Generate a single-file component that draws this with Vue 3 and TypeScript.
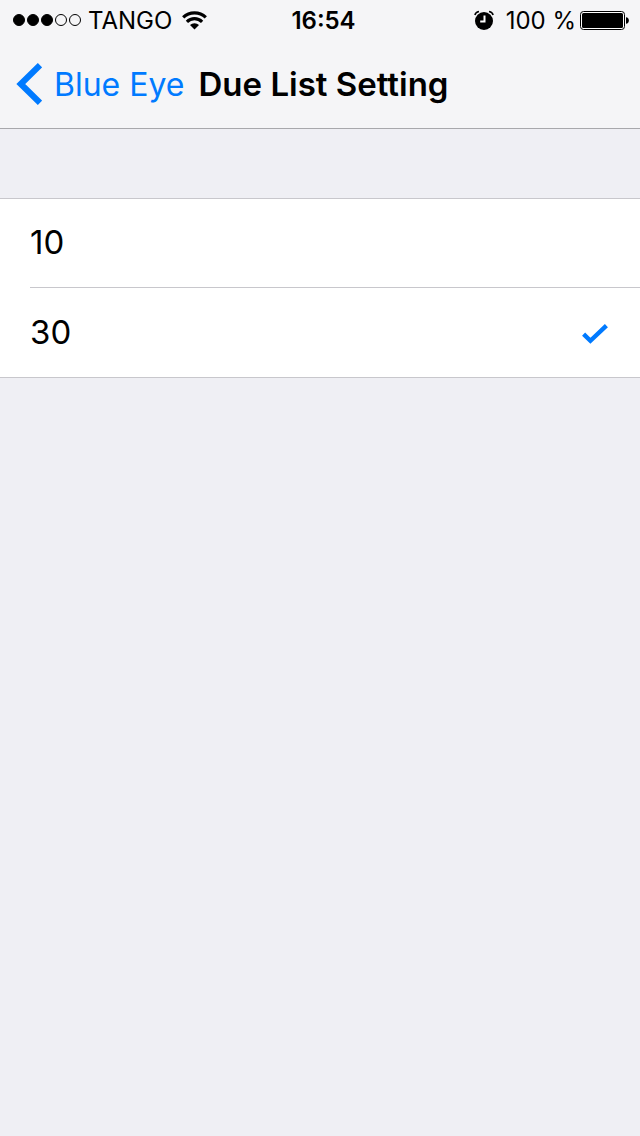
<script setup lang="ts">
import { ref } from 'vue'

const options: number[] = [10, 30]
const selected = ref<number>(30)
const signal: boolean[] = [true, true, true, false, false]
</script>

<template>
  <div class="screen">
    <header class="top">
      <div class="status">
        <div class="group">
          <span class="dots">
            <span v-for="(on, i) in signal" :key="i" class="dot" :class="{ on }"></span>
          </span>
          <span class="text carrier">TANGO</span>
          <svg width="26" height="20" viewBox="0 0 26 20" aria-hidden="true">
            <g fill="none" stroke="#000" stroke-width="3.2">
              <path d="M1.2 7.4A16.2 16.2 0 0 1 23.8 7.4" />
              <path d="M4.9 11.8A10.8 10.8 0 0 1 20.1 11.8" />
            </g>
            <path d="M12.5 19.4L8 15A6.5 6.5 0 0 1 17 15Z" />
          </svg>
        </div>
        <span class="text time">16:54</span>
        <div class="group right">
          <svg width="20" height="20" viewBox="0 0 20 20" aria-hidden="true">
            <circle cx="10" cy="11" r="9" />
            <path d="M.9 5Q1.4 2.2 5 1.5M19.1 5Q18.6 2.2 15 1.5" fill="none" stroke="#000" stroke-width="1.6" />
            <path d="M10.5 5.4V11.5H6.2" fill="none" stroke="#fff" stroke-width="2" />
          </svg>
          <span class="text percent">100 %</span>
          <svg width="49" height="20" viewBox="0 0 49 20" aria-hidden="true">
            <rect x=".5" y="1.5" width="44" height="18" rx="3" fill="#fff" stroke="#000" />
            <rect x="2" y="3" width="41" height="15" rx="1.5" />
            <path d="M46 7.2C49.8 7.4 49.8 13.6 46 13.8Z" />
          </svg>
        </div>
      </div>
      <nav class="nav">
        <button type="button" class="back">
          <svg width="26" height="42" viewBox="0 0 26 42" aria-hidden="true">
            <path d="M24 2.2L4.8 21L24 39.8" fill="none" stroke="#007aff" stroke-width="6.2" />
          </svg>
          <span>Blue Eye</span>
        </button>
        <h1>Due List Setting</h1>
      </nav>
    </header>
    <main class="list" role="radiogroup" aria-label="Due List Setting">
      <label v-for="n in options" :key="n" class="row">
        <input v-model="selected" type="radio" name="due" :value="n" />
        <span class="cell">
          <span>{{ n }}</span>
          <svg v-if="selected === n" class="check" width="26" height="20" viewBox="0 0 26 20" aria-hidden="true">
            <path d="M1.6 10.2L8.4 16.8L24.4 1.6" fill="none" stroke="#007aff" stroke-width="4.4" />
          </svg>
        </span>
      </label>
    </main>
  </div>
</template>

<style>
body {
  background: #efeff4;
}
</style>

<style scoped>
.screen {
  min-height: 100vh;
  background: #efeff4;
  color: #000;
  font-family: Inter, "Liberation Sans", sans-serif;
  font-size: 33px;
}
.top {
  background: #f5f5f7;
  border-bottom: 1px solid #a8a8ac;
}
.status {
  display: grid;
  grid-template-columns: 1fr auto 1fr;
  align-items: center;
  height: 40px;
  padding: 0 11px 0 13px;
  font-size: 24px;
  line-height: 30px;
}
.group {
  display: flex;
  align-items: center;
}
.right {
  justify-content: flex-end;
}
.text {
  padding-top: 2px;
}
.dots {
  display: flex;
  gap: 2px;
}
.dot {
  box-sizing: border-box;
  width: 12px;
  height: 12px;
  border: 1px solid #000;
  border-radius: 50%;
}
.dot.on {
  background: #000;
}
.carrier {
  margin: 0 10px 0 7px;
}
.time {
  padding-left: 5px;
  font-weight: 600;
}
.percent {
  margin: 0 4px 0 12px;
}
.nav {
  display: flex;
  align-items: center;
  gap: 14px;
  height: 88px;
  padding: 0 16px;
}
.back {
  display: flex;
  align-items: center;
  gap: 12px;
  padding: 0;
  border: 0;
  background: none;
  color: #007aff;
  font: inherit;
  font-size: 32px;
  white-space: nowrap;
  cursor: pointer;
}
h1 {
  margin: 0;
  font-size: 33px;
  font-weight: 600;
  white-space: nowrap;
}
.list {
  margin-top: 69px;
  border: solid #c8c7cc;
  border-width: 1px 0;
  background: #fff;
}
.row {
  display: block;
  position: relative;
  padding-left: 30px;
  cursor: pointer;
}
.row input {
  position: absolute;
  inset: 0;
  width: 100%;
  height: 100%;
  margin: 0;
  opacity: 0;
}
.cell {
  box-sizing: border-box;
  display: flex;
  align-items: center;
  justify-content: space-between;
  height: 89px;
  padding: 0 32px 2px 0;
}
.row:not(:last-child) .cell {
  border-bottom: 1px solid #c8c7cc;
}
.check {
  margin-top: 4px;
}
</style>
